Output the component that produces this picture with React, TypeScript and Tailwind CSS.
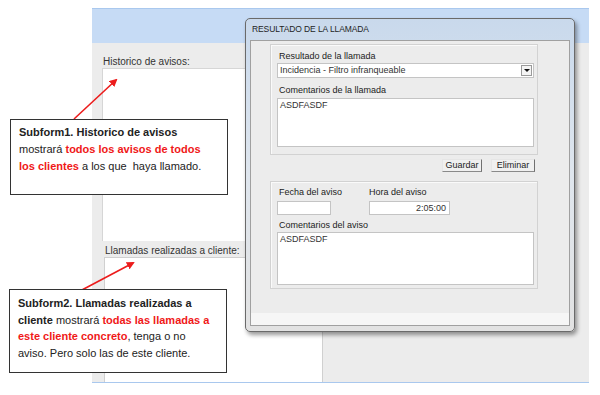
const FONT = { fontFamily: '"Liberation Sans", Arial, sans-serif' };

function Field({ className = "", children }: { className?: string; children?: React.ReactNode }) {
  return (
    <div className={`bg-white border border-[#c4c4c4] text-[9px] leading-[11px] text-[#333] px-[2px] ${className}`}>
      {children}
    </div>
  );
}

function Label({ children, className = "" }: { children: React.ReactNode; className?: string }) {
  return <div className={`text-[9px] leading-[11px] text-[#222] ${className}`}>{children}</div>;
}

function Btn({ children, className = "" }: { children: React.ReactNode; className?: string }) {
  return (
    <div
      className={`h-[13px] flex items-center justify-center text-[9px] text-[#222] bg-[#f0f0f0] border border-[#e6e6e6] border-r-[#707070] border-b-[#8a8a8a] ${className}`}
    >
      {children}
    </div>
  );
}

function ResultDialog() {
  return (
    <div className="absolute left-[245px] top-[18px] w-[330px] h-[314px] rounded-[5px] border border-[#6a6a6a] bg-gradient-to-b from-[#c9d9ec] via-[#dfe6ee] to-[#e2e2e2] shadow-[2px_3px_4px_rgba(0,0,0,0.4)] pt-[4px] px-[4px] pb-[5px] flex flex-col">
      <div className="h-[17px] pl-[2px] text-[8.5px] leading-[13px] text-[#1e1e1e] tracking-[-0.1px]">
        RESULTADO DE LA LLAMADA
      </div>
      <div className="flex-1 bg-[#ececec] border border-[#a0a0a0] flex flex-col">
        <div className="flex-1 pl-[19px] pt-[3px]">
          {/* call result group */}
          <div className="w-[268px] h-[111px] border border-[#d2d2d2] shadow-[inset_1px_1px_0_#fafafa] pl-[6px] pr-[3px] pt-[6px]">
            <Label className="pl-[2px]">Resultado de la llamada</Label>
            <Field className="mt-[1px] h-[15px] flex items-center justify-between pr-[1px]">
              <span>Incidencia - Filtro infranqueable</span>
              <span className="w-[11px] h-[11px] border border-[#9a9a9a] bg-[#f4f4f4] flex items-center justify-center">
                <span className="w-0 h-0 border-l-[3px] border-r-[3px] border-t-[3px] border-l-transparent border-r-transparent border-t-[#111]" />
              </span>
            </Field>
            <Label className="mt-[7px] pl-[2px]">Comentarios de la llamada</Label>
            <Field className="mt-[2px] h-[49px] pt-[1px]">ASDFASDF</Field>
          </div>
          <div className="w-[268px] flex justify-end gap-[9px] pr-[3px] mt-[4px]">
            <Btn className="w-[40px]">Guardar</Btn>
            <Btn className="w-[44px]">Eliminar</Btn>
          </div>
          {/* notice group */}
          <div className="mt-[9px] w-[268px] h-[108px] border border-[#d2d2d2] shadow-[inset_1px_1px_0_#fafafa] pl-[6px] pr-[3px] pt-[5px]">
            <div className="flex">
              <div className="w-[92px]">
                <Label className="pl-[2px]">Fecha del aviso</Label>
                <Field className="mt-[3px] w-[54px] h-[14px]" />
              </div>
              <div>
                <Label>Hora del aviso</Label>
                <Field className="mt-[3px] w-[81px] h-[14px] text-right pr-[3px] pt-[1px]">2:05:00</Field>
              </div>
            </div>
            <Label className="mt-[5px] pl-[2px]">Comentarios del aviso</Label>
            <Field className="mt-[1px] h-[53px] pt-[1px]">ASDFASDF</Field>
          </div>
        </div>
        <div className="h-[12px] bg-[#f6f6f6]" />
      </div>
    </div>
  );
}

function BackgroundForm() {
  return (
    <div className="pl-[92px] pt-[8px]">
      <div className="w-[497px] h-[375px] border-t border-b border-[#a9c8ee] bg-[#ececec] flex flex-col">
        <div className="h-[34px] bg-[#c6dbf5]" />
        <div className="flex-1 flex flex-col pt-[13px]">
          <div className="pl-[11px] text-[10px] leading-[12px] text-[#333]">Historico de avisos:</div>
          <div className="ml-[10px] w-[221px] h-[173px] bg-white border-t border-l border-[#d6d6d6]" />
          <div className="pl-[13px] pt-[4px] text-[10px] leading-[12px] text-[#333]">Llamadas realizadas a cliente:</div>
          <div className="flex-1 flex">
            <div className="ml-[12px] w-[219px] bg-white border-t border-l border-r border-[#d0d0d0]" />
          </div>
        </div>
      </div>
    </div>
  );
}

function Arrows() {
  return (
    <svg className="absolute left-0 top-0 pointer-events-none" width="600" height="395">
      <defs>
        <marker id="tip" markerWidth="8" markerHeight="8" refX="6" refY="4" orient="auto" markerUnits="userSpaceOnUse">
          <path d="M0,0 L8,4 L0,8 Z" fill="#ec1c1c" />
        </marker>
      </defs>
      <line x1="74" y1="119" x2="116" y2="80" stroke="#ec1c1c" strokeWidth="1.6" markerEnd="url(#tip)" />
      <line x1="80" y1="291" x2="133" y2="263" stroke="#ec1c1c" strokeWidth="1.6" markerEnd="url(#tip)" />
    </svg>
  );
}

export default function App() {
  return (
    <div className="relative w-[600px] h-[395px] bg-white overflow-hidden" style={FONT}>
      <BackgroundForm />
      <ResultDialog />
      <Arrows />

      <div className="absolute left-[10px] top-[119px] w-[218px] h-[76px] bg-white border border-[#333] pl-[8px] pt-[4px] text-[11px] leading-[17px] text-[#222]">
        <div className="font-bold">Subform1. Historico de avisos</div>
        <div>
          mostrará <span className="font-bold text-[#f01818]">todos los avisos de todos</span>
        </div>
        <div>
          <span className="font-bold text-[#f01818]">los clientes</span> a los que&nbsp; haya llamado.
        </div>
      </div>

      <div className="absolute left-[9px] top-[289px] w-[218px] h-[84px] bg-white border border-[#333] pl-[8px] pt-[5px] text-[11px] leading-[16.5px] text-[#222]">
        <div className="font-bold">Subform2. Llamadas realizadas a</div>
        <div>
          <span className="font-bold">cliente</span> mostrará <span className="font-bold text-[#f01818]">todas las llamadas a</span>
        </div>
        <div>
          <span className="font-bold text-[#f01818]">este cliente concreto</span>, tenga o no
        </div>
        <div>aviso. Pero solo las de este cliente.</div>
      </div>
    </div>
  );
}
